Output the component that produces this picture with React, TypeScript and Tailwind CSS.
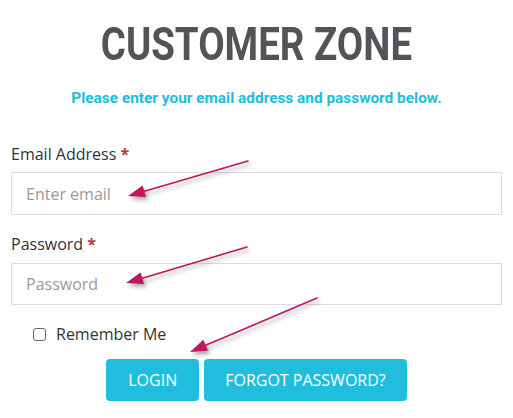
import React from 'react';

type Arrow = { x1: number; y1: number; x2: number; y2: number };

const arrows: Arrow[] = [
  { x1: 248, y1: 161, x2: 128, y2: 196 },
  { x1: 247, y1: 247, x2: 126, y2: 283 },
  { x1: 317, y1: 298, x2: 190, y2: 352 },
];

function head(a: Arrow, len = 17, half = 6) {
  const dx = a.x2 - a.x1;
  const dy = a.y2 - a.y1;
  const d = Math.hypot(dx, dy);
  const ux = dx / d;
  const uy = dy / d;
  const bx = a.x2 - ux * len;
  const by = a.y2 - uy * len;
  const px = -uy * half;
  const py = ux * half;
  return {
    points: `${a.x2},${a.y2} ${bx + px},${by + py} ${bx - px},${by - py}`,
    bx,
    by,
  };
}

function Arrows() {
  return (
    <svg className="absolute inset-0 pointer-events-none" width={513} height={418}>
      <defs>
        <filter id="sh" x="-20%" y="-20%" width="140%" height="140%">
          <feDropShadow dx="2" dy="3" stdDeviation="2" floodColor="#000" floodOpacity="0.35" />
        </filter>
      </defs>
      {arrows.map((a, i) => {
        const h = head(a);
        return (
          <g key={i} filter="url(#sh)">
            <line x1={a.x1} y1={a.y1} x2={h.bx} y2={h.by} stroke="#c0135f" strokeWidth={1.6} strokeLinecap="round" />
            <polygon points={h.points} fill="#c0135f" />
          </g>
        );
      })}
    </svg>
  );
}

export default function App() {
  return (
    <div className="relative w-[513px] h-[418px] bg-white px-[11px] overflow-hidden font-['Open_Sans',sans-serif] text-[#333]">
      <div className="pt-[21px] text-center">
        <h1 className="inline-block scale-x-[0.835] text-[46px] leading-[46px] font-bold text-[#545458] font-['Roboto',sans-serif]">
          CUSTOMER ZONE
        </h1>
      </div>
      <p className="mt-[21px] text-center text-[15.4px] leading-[20px] font-bold text-[#21bddc] font-['Roboto',sans-serif]">
        Please enter your email address and password below.
      </p>

      <form className="mt-[35px]" onSubmit={(e) => e.preventDefault()}>
        <label className="block text-[16px] leading-[22px]">
          Email Address <span className="text-[#a8413f] font-bold">*</span>
        </label>
        <input
          type="email"
          placeholder="Enter email"
          className="mt-[7px] block w-full h-[43px] border border-[#dadee3] px-[14px] text-[16px] placeholder:text-[#9a9a9a] outline-none"
        />

        <label className="mt-[18px] block text-[16px] leading-[22px]">
          Password <span className="text-[#a8413f] font-bold">*</span>
        </label>
        <input
          type="password"
          placeholder="Password"
          className="mt-[8px] block w-full h-[42px] border border-[#dadee3] px-[14px] text-[16px] placeholder:text-[#9a9a9a] outline-none"
        />

        <div className="mt-[18px] flex items-center pl-[22px] text-[16px] leading-[22px]">
          <span className="w-[13px] h-[13px] rounded-[3px] border border-[#666] bg-white" />
          <span className="ml-[10px]">Remember Me</span>
        </div>

        <div className="mt-[14px] flex justify-center gap-[5px]">
          <button type="submit" className="h-[42px] px-[22px] rounded-[4px] bg-[#20bedc] text-white text-[16px] uppercase">
            Login
          </button>
          <button type="button" className="h-[42px] px-[21px] rounded-[4px] bg-[#20bedc] text-white text-[16px] uppercase">
            Forgot Password?
          </button>
        </div>
      </form>

      <Arrows />
    </div>
  );
}
